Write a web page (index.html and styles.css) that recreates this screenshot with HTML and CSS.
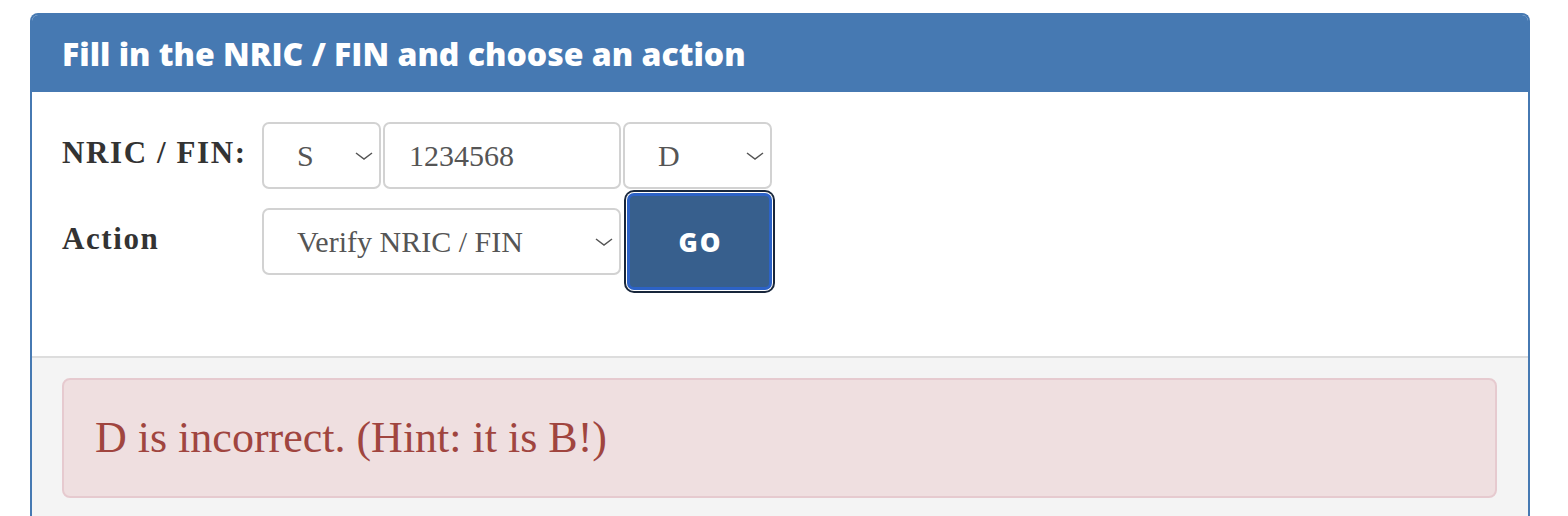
FILE: index.html
```html
<!DOCTYPE html>
<html lang="en">
<head>
<meta charset="utf-8">
<title>NRIC / FIN</title>
<link rel="stylesheet" href="styles.css">
</head>
<body>
<div class="page">
  <div class="panel">
    <div class="panel-heading">
      <h3 class="panel-title">Fill in the NRIC / FIN and choose an action</h3>
    </div>
    <div class="panel-body">
      <div class="form-row">
        <label class="form-label">NRIC / FIN:</label>
        <div class="controls">
          <div class="select-wrap prefix">
            <select class="control"><option>S</option></select>
            <svg class="chevron" viewBox="0 0 18 8" width="18" height="8"><path d="M1 1 L9 7 L17 1" fill="none" stroke="#555" stroke-width="1.5"/></svg>
          </div>
          <input class="control number" type="text" value="1234568">
          <div class="select-wrap suffix">
            <select class="control"><option>D</option></select>
            <svg class="chevron" viewBox="0 0 18 8" width="18" height="8"><path d="M1 1 L9 7 L17 1" fill="none" stroke="#555" stroke-width="1.5"/></svg>
          </div>
        </div>
      </div>
      <div class="form-row row-action">
        <label class="form-label">Action</label>
        <div class="controls">
          <div class="select-wrap action">
            <select class="control"><option>Verify NRIC / FIN</option></select>
            <svg class="chevron" viewBox="0 0 18 8" width="18" height="8"><path d="M1 1 L9 7 L17 1" fill="none" stroke="#555" stroke-width="1.5"/></svg>
          </div>
          <button class="btn-go" type="button">GO</button>
        </div>
      </div>
    </div>
    <div class="panel-footer">
      <div class="alert">D is incorrect. (Hint: it is B!)</div>
    </div>
  </div>
</div>
</body>
</html>
```
FILE: styles.css
```css
html, body {
  margin: 0;
  padding: 0;
  background: #ffffff;
}

.page {
  padding: 13px 0 0 30px;
}

.panel {
  width: 1500px;
  box-sizing: border-box;
  border: 2px solid #4679b2;
  border-bottom: none;
  border-radius: 8px 8px 0 0;
  overflow: hidden;
}

.panel-heading {
  background: #4679b2;
  height: 77px;
  display: flex;
  align-items: center;
  padding-left: 30px;
}

.panel-title {
  margin: 0;
  font-family: "Open Sans", sans-serif;
  font-weight: 800;
  font-size: 32px;
  color: #ffffff;
  letter-spacing: 0;
}

.panel-body {
  padding: 30px 30px 66px 30px;
  display: flex;
  flex-direction: column;
  gap: 4px;
}

.form-row {
  display: flex;
  align-items: center;
}

.form-label {
  width: 200px;
  flex: none;
  font-family: "Liberation Serif", serif;
  font-weight: 700;
  font-size: 31px;
  color: #333333;
  letter-spacing: 1.6px;
  padding-bottom: 6px;
}

.controls {
  display: flex;
  align-items: center;
  gap: 2px;
}

.select-wrap {
  position: relative;
  display: flex;
}

.control {
  box-sizing: border-box;
  height: 67px;
  border: 2px solid #d2d2d2;
  border-radius: 7px;
  background: #ffffff;
  font-family: "Liberation Serif", serif;
  font-size: 30px;
  color: #555555;
  margin: 0;
  outline: none;
}

select.control {
  appearance: none;
  -webkit-appearance: none;
  padding: 0 0 0 33px;
}

.prefix .control { width: 119px; }
.number { width: 238px; padding: 0 0 0 24px; }
.suffix .control { width: 149px; }
.action .control { width: 359px; }

.chevron {
  position: absolute;
  right: 8px;
  top: 30px;
  pointer-events: none;
}

.btn-go {
  margin-left: 4px;
  box-sizing: border-box;
  width: 145px;
  height: 97px;
  background: #375f8d;
  border: 3px solid #2c62c6;
  border-radius: 7px;
  box-shadow: 0 0 0 1px #ffffff, 0 0 0 3px #18263b;
  color: #ffffff;
  font-family: "Open Sans", sans-serif;
  font-weight: 800;
  font-size: 26px;
  letter-spacing: 2px;
  padding: 0 0 0 2px;
}

.panel-footer {
  background: #f4f4f4;
  border-top: 2px solid #dddddd;
  padding: 20px 31px 20px 30px;
}

.alert {
  box-sizing: border-box;
  height: 120px;
  border: 2px solid #e6cacf;
  border-radius: 8px;
  background: #efdfe0;
  color: #a0453f;
  font-family: "Liberation Serif", serif;
  font-size: 44px;
  display: flex;
  align-items: center;
  padding: 0 0 2px 31px;
}
```
